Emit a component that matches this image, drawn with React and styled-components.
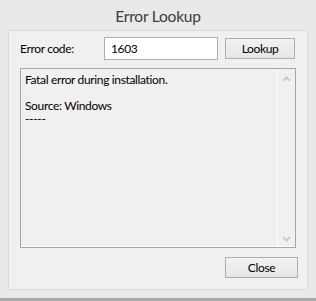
import styled, { createGlobalStyle } from 'styled-components';

const GlobalStyle = createGlobalStyle`
  html, body {
    margin: 0;
    padding: 0;
    background: #e9e9e9;
  }
  * {
    box-sizing: border-box;
  }
`;

const Window = styled.div`
  width: 316px;
  height: 301px;
  display: flex;
  flex-direction: column;
  background: #e9e9e9;
  font-family: Lato, 'Liberation Sans', Arial, sans-serif;
  font-size: 12px;
  letter-spacing: -0.35px;
  color: #000;
  overflow: hidden;
`;

const Title = styled.div`
  height: 30px;
  display: flex;
  align-items: center;
  justify-content: center;
  font-size: 15.5px;
  letter-spacing: -0.2px;
  color: #3a3a3a;
  padding-top: 1px;
`;

const Panel = styled.div`
  margin: 0 8px;
  height: 260px;
  background: #f0f0f0;
  border: 1px solid #d9d9d9;
  padding: 6px 9px 0 11px;
  display: flex;
  flex-direction: column;
`;

const Row = styled.div`
  display: flex;
  align-items: center;
  height: 23px;
`;

const Label = styled.label`
  width: 84px;
`;

const Input = styled.div`
  width: 114px;
  height: 23px;
  background: #fff;
  border: 1px solid #abadb3;
  padding: 3px 0 0 6px;
`;

const Button = styled.button`
  width: ${(p) => p.$width}px;
  height: 21px;
  margin-left: ${(p) => (p.$right ? 'auto' : '7px')};
  border: 1px solid #adadad;
  background: linear-gradient(#f2f2f2, #e6e6e6);
  font-family: inherit;
  font-size: 12px;
  letter-spacing: inherit;
  color: #000;
  padding: 0;
`;

const Output = styled.div`
  margin-top: 8px;
  width: 276px;
  height: 180px;
  border: 1px solid #a5a5a5;
  box-shadow: inset 0 -1px #fff;
  display: flex;
`;

const Text = styled.div`
  flex: 1;
  padding: 4px 0 0 4px;
  line-height: 13px;
  white-space: pre;
`;

const ScrollBar = styled.div`
  width: 18px;
  border-left: 1px solid #fff;
  display: flex;
  flex-direction: column;
  justify-content: space-between;
  align-items: center;
  padding: 7px 0 5px;
`;

const Arrow = ({ down }) => (
  <svg width="9" height="6" viewBox="0 0 9 6">
    <path
      d={down ? 'M1 1 L4.5 4.5 L8 1' : 'M1 5 L4.5 1.5 L8 5'}
      fill="none"
      stroke="#c2c2c2"
      strokeWidth="1.6"
    />
  </svg>
);

const Footer = styled.div`
  display: flex;
  margin-top: 9px;
`;

const BottomEdge = styled.div`
  margin-top: auto;
  height: 3px;
  background: #ababab;
`;

export default function App() {
  return (
    <>
      <GlobalStyle />
      <Window>
        <Title>Error Lookup</Title>
        <Panel>
          <Row>
            <Label>Error code:</Label>
            <Input>1603</Input>
            <Button $width={70}>Lookup</Button>
          </Row>
          <Output>
            <Text>{'Fatal error during installation.\n\nSource: Windows\n-----'}</Text>
            <ScrollBar>
              <Arrow />
              <Arrow down />
            </ScrollBar>
          </Output>
          <Footer>
            <Button $width={73} $right>
              Close
            </Button>
          </Footer>
        </Panel>
        <BottomEdge />
      </Window>
    </>
  );
}
